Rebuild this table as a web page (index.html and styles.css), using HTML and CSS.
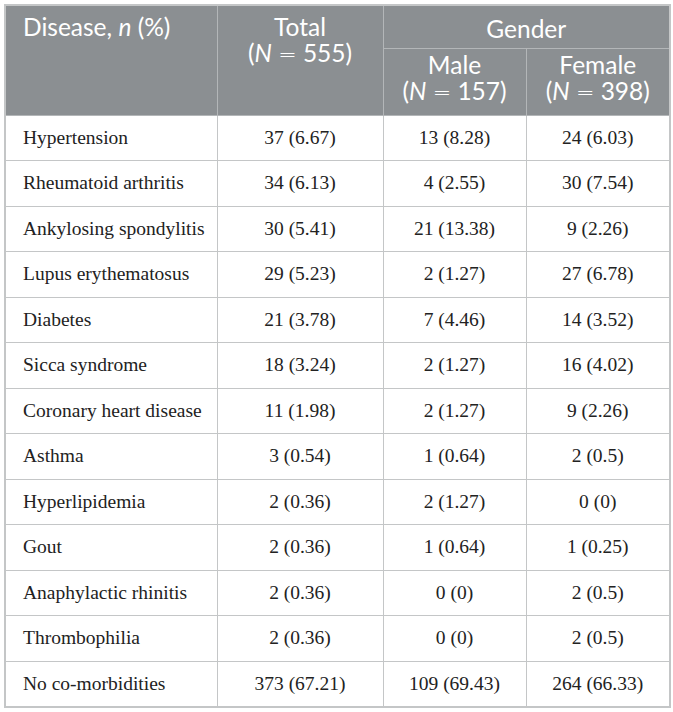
FILE: index.html
```html
<!DOCTYPE html>
<html>
<head>
<meta charset="utf-8">
<link rel="stylesheet" href="styles.css">
</head>
<body>
<table class="data">
  <colgroup>
    <col class="c1"><col class="c2"><col class="c3"><col class="c4">
  </colgroup>
  <thead>
    <tr>
      <th rowspan="2" class="left">Disease, <i>n</i> (%)</th>
      <th rowspan="2" class="total">Total<br>(<i>N</i> <span class="eq">=</span> 555)</th>
      <th colspan="2" class="group">Gender</th>
    </tr>
    <tr>
      <th class="sub">Male<br>(<i>N</i> <span class="eq">=</span> 157)</th>
      <th class="sub">Female<br>(<i>N</i> <span class="eq">=</span> 398)</th>
    </tr>
  </thead>
  <tbody>
    <tr><td>Hypertension</td><td>37 (6.67)</td><td>13 (8.28)</td><td>24 (6.03)</td></tr>
    <tr><td>Rheumatoid arthritis</td><td>34 (6.13)</td><td>4 (2.55)</td><td>30 (7.54)</td></tr>
    <tr><td>Ankylosing spondylitis</td><td>30 (5.41)</td><td>21 (13.38)</td><td>9 (2.26)</td></tr>
    <tr><td>Lupus erythematosus</td><td>29 (5.23)</td><td>2 (1.27)</td><td>27 (6.78)</td></tr>
    <tr><td>Diabetes</td><td>21 (3.78)</td><td>7 (4.46)</td><td>14 (3.52)</td></tr>
    <tr><td>Sicca syndrome</td><td>18 (3.24)</td><td>2 (1.27)</td><td>16 (4.02)</td></tr>
    <tr><td>Coronary heart disease</td><td>11 (1.98)</td><td>2 (1.27)</td><td>9 (2.26)</td></tr>
    <tr><td>Asthma</td><td>3 (0.54)</td><td>1 (0.64)</td><td>2 (0.5)</td></tr>
    <tr><td>Hyperlipidemia</td><td>2 (0.36)</td><td>2 (1.27)</td><td>0 (0)</td></tr>
    <tr><td>Gout</td><td>2 (0.36)</td><td>1 (0.64)</td><td>1 (0.25)</td></tr>
    <tr><td>Anaphylactic rhinitis</td><td>2 (0.36)</td><td>0 (0)</td><td>2 (0.5)</td></tr>
    <tr><td>Thrombophilia</td><td>2 (0.36)</td><td>0 (0)</td><td>2 (0.5)</td></tr>
    <tr><td>No co-morbidities</td><td>373 (67.21)</td><td>109 (69.43)</td><td>264 (66.33)</td></tr>
  </tbody>
</table>
</body>
</html>
```
FILE: styles.css
```css
html, body {
  margin: 0;
  padding: 0;
  background: #ffffff;
}
body {
  padding: 4px 0 0 4px;
}
.data {
  border-collapse: collapse;
  table-layout: fixed;
  width: 665px;
  border: 2px solid #c4c6c7;
}
.c1 { width: 212px; }
.c2 { width: 166px; }
.c3 { width: 143px; }
.c4 { width: 144px; }
.data th {
  background: #8b8f92;
  color: #ffffff;
  font-family: Lato, "Open Sans", sans-serif;
  font-weight: 400;
  font-size: 24.5px;
  line-height: 26px;
  text-align: center;
  vertical-align: top;
  padding: 8px 4px 0 4px;
  border: 1px solid #b3b6b8;
  border-top: none;
  white-space: nowrap;
}
.data th .eq {
  font-family: "DejaVu Sans", sans-serif;
  font-weight: 300;
  font-size: 22px;
}
.data th.left {
  text-align: left;
  padding-left: 17px;
  border-left: none;
}
.data th.group {
  height: 43px;
  padding-top: 10px;
  box-sizing: border-box;
  border-right: none;
}
.data th.sub {
  height: 67px;
  padding-top: 3px;
  box-sizing: border-box;
}
.data th.sub:last-child {
  border-right: none;
}
.data td {
  font-family: "Liberation Serif", "Times New Roman", serif;
  font-size: 19.5px;
  color: #222222;
  height: 45.5px;
  padding: 0 6px;
  box-sizing: border-box;
  text-align: center;
  vertical-align: middle;
  border: 1px solid #c4c6c7;
  white-space: nowrap;
}
.data td:first-child {
  text-align: left;
  padding-left: 17px;
}
```
